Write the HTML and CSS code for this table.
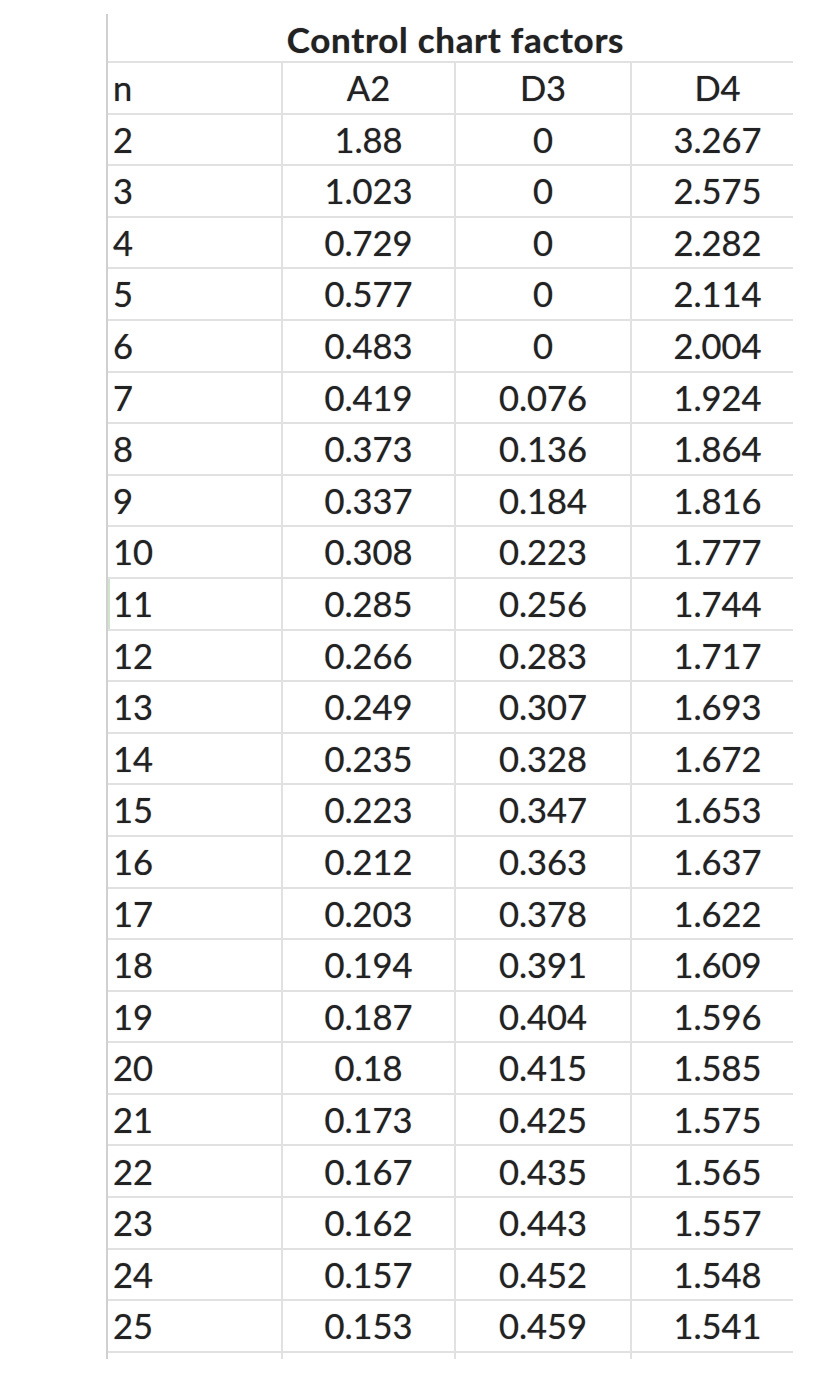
FILE: index.html
```html
<!DOCTYPE html>
<html>
<head>
<meta charset="utf-8">
<link rel="stylesheet" href="styles.css">
</head>
<body>
<div class="sheet">
  <div class="clip">
  <div class="grid" id="grid">
    <div class="cell title-blank"></div>
    <div class="cell title">Control chart factors</div>
    <div class="cell title-blank"></div>

    <div class="cell first">n</div><div class="cell">A2</div><div class="cell">D3</div><div class="cell">D4</div>
    <div class="cell first">2</div><div class="cell">1.88</div><div class="cell">0</div><div class="cell">3.267</div>
    <div class="cell first">3</div><div class="cell">1.023</div><div class="cell">0</div><div class="cell">2.575</div>
    <div class="cell first">4</div><div class="cell">0.729</div><div class="cell">0</div><div class="cell">2.282</div>
    <div class="cell first">5</div><div class="cell">0.577</div><div class="cell">0</div><div class="cell">2.114</div>
    <div class="cell first">6</div><div class="cell">0.483</div><div class="cell">0</div><div class="cell">2.004</div>
    <div class="cell first">7</div><div class="cell">0.419</div><div class="cell">0.076</div><div class="cell">1.924</div>
    <div class="cell first">8</div><div class="cell">0.373</div><div class="cell">0.136</div><div class="cell">1.864</div>
    <div class="cell first">9</div><div class="cell">0.337</div><div class="cell">0.184</div><div class="cell">1.816</div>
    <div class="cell first">10</div><div class="cell">0.308</div><div class="cell">0.223</div><div class="cell">1.777</div>
    <div class="cell first sel">11</div><div class="cell">0.285</div><div class="cell">0.256</div><div class="cell">1.744</div>
    <div class="cell first">12</div><div class="cell">0.266</div><div class="cell">0.283</div><div class="cell">1.717</div>
    <div class="cell first">13</div><div class="cell">0.249</div><div class="cell">0.307</div><div class="cell">1.693</div>
    <div class="cell first">14</div><div class="cell">0.235</div><div class="cell">0.328</div><div class="cell">1.672</div>
    <div class="cell first">15</div><div class="cell">0.223</div><div class="cell">0.347</div><div class="cell">1.653</div>
    <div class="cell first">16</div><div class="cell">0.212</div><div class="cell">0.363</div><div class="cell">1.637</div>
    <div class="cell first">17</div><div class="cell">0.203</div><div class="cell">0.378</div><div class="cell">1.622</div>
    <div class="cell first">18</div><div class="cell">0.194</div><div class="cell">0.391</div><div class="cell">1.609</div>
    <div class="cell first">19</div><div class="cell">0.187</div><div class="cell">0.404</div><div class="cell">1.596</div>
    <div class="cell first">20</div><div class="cell">0.18</div><div class="cell">0.415</div><div class="cell">1.585</div>
    <div class="cell first">21</div><div class="cell">0.173</div><div class="cell">0.425</div><div class="cell">1.575</div>
    <div class="cell first">22</div><div class="cell">0.167</div><div class="cell">0.435</div><div class="cell">1.565</div>
    <div class="cell first">23</div><div class="cell">0.162</div><div class="cell">0.443</div><div class="cell">1.557</div>
    <div class="cell first">24</div><div class="cell">0.157</div><div class="cell">0.452</div><div class="cell">1.548</div>
    <div class="cell first">25</div><div class="cell">0.153</div><div class="cell">0.459</div><div class="cell">1.541</div>

    <div class="stub first"></div><div class="stub"></div><div class="stub"></div><div class="stub"></div>
  </div>
  </div>
</div>
</body>
</html>
```
FILE: styles.css
```css
html, body {
  margin: 0;
  padding: 0;
  background: #ffffff;
}
body {
  font-family: Lato, "Open Sans", sans-serif;
  color: #222222;
}
.sheet {
  padding: 14px 0 0 106px;
}
.clip {
  width: 687px;
  overflow: hidden;
}
.grid {
  display: grid;
  grid-template-columns: 173px 173px 176px 173px;
  grid-template-rows: 49px repeat(25, 51.6px) 6px;
  width: 697px;
  border-left: 2px solid #d0d0d0;
}
.cell {
  box-sizing: border-box;
  border-bottom: 2px solid #e1e1e1;
  border-left: 2px solid #e1e1e1;
  font-size: 34.5px;
  line-height: 1;
  display: flex;
  align-items: center;
  justify-content: center;
  padding-top: 1px;
  text-shadow: 0 0 1px rgba(20, 20, 40, 0.55);
}
.cell.first {
  border-left: none;
  justify-content: flex-start;
  padding-left: 5px;
}
.cell.sel {
  box-shadow: inset 2px 0 0 #cfe3cf;
}
.title-blank {
  border-left: none;
}
.title {
  grid-column: span 2;
  border-left: none;
  font-weight: bold;
  font-size: 35px;
  letter-spacing: 0.7px;
  padding-top: 4px;
}
.stub {
  border-left: 2px solid #e1e1e1;
}
.stub.first {
  border-left: none;
}
```
